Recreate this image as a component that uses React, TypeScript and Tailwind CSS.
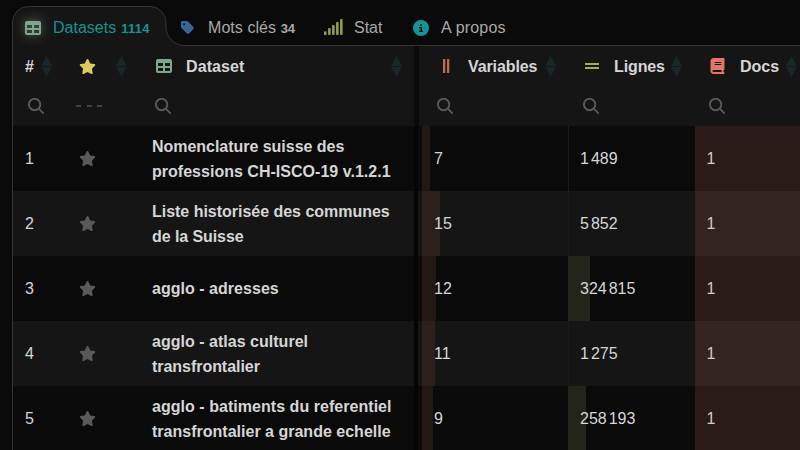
import type { ReactNode } from "react";
import { FaTable, FaTag, FaStar, FaBook, FaCircleInfo } from "react-icons/fa6";

const rows = [
  { id: 1, name: [["Nomenclature suisse des", "tracking-[-0.03px]"], ["professions CH-ISCO-19 v.1.2.1", "tracking-[0.02px]"]], vars: "7", varBar: 8, lines: ["1", "489"], lineBar: 1 },
  { id: 2, name: [["Liste historisée des communes", "tracking-[-0.02px]"], ["de la Suisse", "tracking-[-0.08px]"]], vars: "15", varBar: 17.5, lines: ["5", "852"], lineBar: 1 },
  { id: 3, name: [["agglo - adresses", "tracking-[0.03px]"]], vars: "12", varBar: 14, lines: ["324", "815"], lineBar: 22 },
  { id: 4, name: [["agglo - atlas culturel", "tracking-[0.02px]"], ["transfrontalier", "tracking-[-0.04px]"]], vars: "11", varBar: 13, lines: ["1", "275"], lineBar: 1 },
  { id: 5, name: [["agglo - batiments du referentiel", "tracking-[0.04px]"], ["transfrontalier a grande echelle", "tracking-[0.01px]"]], vars: "9", varBar: 10.5, lines: ["258", "193"], lineBar: 18 },
];

function Sort({ className = "" }: { className?: string }) {
  return (
    <svg className={`h-[21px] w-[11px] shrink-0 fill-[#192728] ${className}`} viewBox="0 0 11 21">
      <path d="M5.5 0 11 10H0ZM0 10.7H11L5.5 21Z" />
    </svg>
  );
}

function Search() {
  return (
    <svg className="size-[17px] shrink-0" viewBox="0 0 17 17" fill="none" stroke="#595959" strokeWidth="1.9" strokeLinecap="round">
      <circle cx="6.6" cy="6.5" r="5.7" />
      <path d="m10.8 10.7 4.4 4.4" />
    </svg>
  );
}

function Signal() {
  return (
    <svg className="h-[17px] w-[19px] shrink-0 fill-[#93a346]" viewBox="0 0 19 17">
      <rect x="0" y="12.3" width="2.5" height="3.7" rx=".8" />
      <rect x="4.1" y="9" width="2.5" height="7" rx=".8" />
      <rect x="8.1" y="6" width="2.5" height="10" rx=".8" />
      <rect x="12.1" y="3" width="2.5" height="13" rx=".8" />
      <rect x="16.1" y="0" width="2.5" height="16" rx=".8" />
    </svg>
  );
}

function HeaderCell({ className, children }: { className: string; children: ReactNode }) {
  return <div className={`flex h-[40px] shrink-0 items-center ${className}`}>{children}</div>;
}

export default function App() {
  return (
    <div className="relative h-[450px] w-[800px] overflow-hidden bg-[#0a0a0a] font-['Liberation_Sans',Arial,sans-serif] text-[16px] text-[#d6d6d6]">
      <svg className="absolute inset-0 h-[450px] w-[800px]" viewBox="0 0 800 450" fill="none">
        <path d="M12.5 126V22.5a16 16 0 0 1 16-16H150a16 16 0 0 1 16 16V27a18.5 18.5 0 0 0 18.5 18.5H800V126Z" fill="#151515" />
        <path d="M12.5 450V22.5a16 16 0 0 1 16-16H150a16 16 0 0 1 16 16V27a18.5 18.5 0 0 0 18.5 18.5H800" stroke="#343434" />
      </svg>
      <div className="relative">
        <nav className="flex h-[46px] pt-[9px] pl-[25px] leading-[37px] text-[#a9a9a9]">
          <div className="flex w-[155px] items-center text-[#159391]">
            <FaTable className="mr-[12px] size-[16px] text-[#80a78a] drop-shadow-[0_0_6px_#65846c]" />
            <span>Datasets</span>
            <b className="ml-[5px] pt-[1px] text-[13px] tracking-[0.3px]">1114</b>
          </div>
          <div className="flex w-[144px] items-center">
            <FaTag className="mr-[13px] size-[15px] text-[#396599]" />
            <span className="tracking-[0.06px]">Mots clés</span>
            <b className="ml-[4.5px] pt-[1px] text-[13px]">34</b>
          </div>
          <div className="flex w-[89px] items-center">
            <Signal />
            <span className="ml-[11px]">Stat</span>
          </div>
          <div className="flex items-center">
            <FaCircleInfo className="mr-[12px] size-[16px] text-[#129695]" />
            <span className="tracking-[0.2px]">A propos</span>
          </div>
        </nav>
        <div className="ml-[13px] flex h-[80px]">
          <div className="w-[401px]">
            <div className="flex font-bold">
              <HeaderCell className="w-[66px] pl-[12px]"><span className="w-[16px] pt-[2px]">#</span><Sort /></HeaderCell>
              <HeaderCell className="w-[77px]"><FaStar className="size-[17px] text-[#dcca5e]" /><Sort className="ml-[20px]" /></HeaderCell>
              <HeaderCell className="w-[258px]"><FaTable className="size-[16px] text-[#80a78a]" /><span className="ml-[14px] w-[205px] pt-[2px] tracking-[0.1px]">Dataset</span><Sort /></HeaderCell>
            </div>
            <div className="flex h-[40px] items-center">
              <div className="w-[49px] pl-[15px]"><Search /></div>
              <div className="flex w-[93px] gap-[5.5px] pl-[14px]">
                <i className="h-[2px] w-[5px] bg-[#424242]" /><i className="h-[2px] w-[5px] bg-[#424242]" /><i className="h-[2px] w-[5px] bg-[#424242]" />
              </div>
              <Search />
            </div>
          </div>
          <div className="w-[5px] bg-[#0a0a0a]" />
          <div className="w-[381px]">
            <div className="flex font-bold">
              <HeaderCell className="w-[149px] pl-[24px]"><svg className="mr-[18px] h-[14px] w-[7px] fill-[#ba704e]" viewBox="0 0 7 14"><path d="M0 0h2.3v14H0zM4 0h2.3v14H4z" /></svg><span className="w-[77px] pt-[2px] tracking-[-0.1px]">Variables</span><Sort /></HeaderCell>
              <HeaderCell className="w-[127px] pl-[17px]"><span className="mr-[15px] grid gap-[2px]"><i className="h-[2px] w-[14px] bg-[#a1b448]" /><i className="h-[2px] w-[14px] bg-[#a1b448]" /></span><span className="w-[57px] pt-[2px] tracking-[-0.12px]">Lignes</span><Sort /></HeaderCell>
              <HeaderCell className="w-[105px] pl-[15px]"><FaBook className="mr-[15px] h-[16px] w-[15px] text-[#e27861]" /><span className="w-[46px] pt-[2px]">Docs</span><Sort /></HeaderCell>
            </div>
            <div className="flex h-[40px] items-center">
              <div className="w-[146px] pl-[18px]"><Search /></div>
              <div className="w-[126px] pl-[18px]"><Search /></div>
              <div className="pl-[18px]"><Search /></div>
            </div>
          </div>
        </div>
        <div className="ml-[13px]">
          {rows.map((r) => {
            const odd = r.id % 2 === 1;
            return (
              <div key={r.id} className={`flex h-[65px] items-center ${odd ? "bg-[#0a0a0a]" : "bg-[#151515]"}`}>
                <div className="w-[66px] pl-[12px]">{r.id}</div>
                <div className="w-[73px]"><FaStar className="size-[17px] text-[#595959]" /></div>
                <div className="w-[262px] font-bold leading-[25px]">
                  {r.name.map(([line, tracking]) => <div key={line} className={`whitespace-nowrap ${tracking}`}>{line}</div>)}
                </div>
                <div className="h-full w-[4px] bg-[#050505]" />
                <div className="w-[4px]" />
                <div className="grid h-full w-[146px] items-center">
                  <div className={`col-start-1 row-start-1 h-full ${odd ? "bg-[#241817]" : "bg-[#2b211c]"}`} style={{ width: r.varBar }} />
                  <span className="col-start-1 row-start-1 pl-[12px]">{r.vars}</span>
                </div>
                <div className="grid h-full w-[126.5px] items-center">
                  <div className={`col-start-1 row-start-1 h-full ${r.lineBar > 1 ? "bg-[#23251a]" : "bg-[#1b1c16]"}`} style={{ width: r.lineBar }} />
                  <span className="col-start-1 row-start-1 flex gap-[2px] pl-[12px]"><span>{r.lines[0]}</span><span>{r.lines[1]}</span></span>
                </div>
                <div className={`flex h-full flex-1 items-center pl-[12px] text-[#d8c9c6] ${odd ? "bg-[#2a1b18]" : "bg-[#332421]"}`}>1</div>
              </div>
            );
          })}
        </div>
      </div>
    </div>
  );
}
